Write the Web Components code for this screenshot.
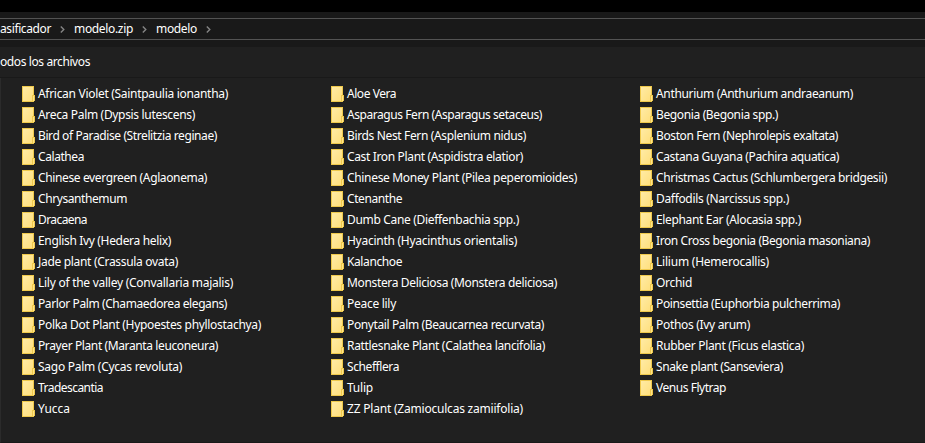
<!DOCTYPE html>
<html lang="es"><head><meta charset="utf-8"><title>modelo</title>
<style>html,body{margin:0;background:#202020;overflow:hidden}</style></head>
<body><file-window></file-window>
<script>
class FitText extends HTMLElement{
  connectedCallback(){
    const r=this.attachShadow({mode:'open'});
    r.innerHTML='<style>:host{display:inline-block;white-space:pre}span{display:inline-block}</style><span><slot></slot></span>';
    const s=r.querySelector('span'),w=+this.getAttribute('width');
    this.style.width=w+'px';
    s.style.letterSpacing=((w-s.getBoundingClientRect().width)/this.textContent.length)+'px';
  }
}
customElements.define('fit-text',FitText);

class FolderItem extends HTMLElement{
  connectedCallback(){
    this.attachShadow({mode:'open'}).innerHTML=`<style>
    :host{display:flex;height:21px;align-items:center;gap:3px;color:#fff}
    svg{width:13px;height:16px;flex:none}fit-text{line-height:21px}</style>
    <svg viewBox="0 0 13 16"><defs><linearGradient id="g" x2="1" y2="1"><stop stop-color="#ffeba5"/><stop offset="1" stop-color="#ffdf7c"/></linearGradient></defs>
    <path d="M0 0h12v9h1v6h-1v1H0z" fill="#efc94c"/><path d="M1 1h10v8h-1v6H1z" fill="url(#g)"/><path d="M11 10h1v5h-1z" fill="#ffe38a"/></svg>
    <fit-text width="${this.getAttribute('width')}">${this.getAttribute('name')}</fit-text>`;
  }
}
customElements.define('folder-item',FolderItem);

class PathBar extends HTMLElement{
  connectedCallback(){
    const chev='<svg viewBox="0 0 5 7"><path d="M.8.5L3.8 3.5L.8 6.5" fill="none" stroke="#858585" stroke-width="1.4"/></svg>';
    this.attachShadow({mode:'open'}).innerHTML=`<style>
    :host{display:block;box-sizing:border-box;height:35px;padding-top:6px;background:#191919;color:#fff}
    div{display:flex;align-items:center;box-sizing:border-box;height:22px;border:solid #535353;border-width:1px 0}
    fit-text{line-height:20px}svg{width:5px;height:7px;margin:1px 9px 0}</style>
    <div><fit-text width="51">asificador</fit-text>${chev}<fit-text width="59">modelo.zip</fit-text>${chev}<fit-text width="41">modelo</fit-text>${chev}</div>`;
  }
}
customElements.define('path-bar',PathBar);

class FileWindow extends HTMLElement{
  connectedCallback(){
    const cols=[
    [['African Violet (Saintpaulia ionantha)',190],['Areca Palm (Dypsis lutescens)',157],['Bird of Paradise (Strelitzia reginae)',179],['Calathea',46],['Chinese evergreen (Aglaonema)',169],['Chrysanthemum',89],['Dracaena',49],['English Ivy (Hedera helix)',133],['Jade plant (Crassula ovata)',140],['Lily of the valley (Convallaria majalis)',195],['Parlor Palm (Chamaedorea elegans)',189],['Polka Dot Plant (Hypoestes phyllostachya)',223],['Prayer Plant (Maranta leuconeura)',180],['Sago Palm (Cycas revoluta)',144],['Tradescantia',65],['Yucca',32]],
    [['Aloe Vera',49],['Asparagus Fern (Asparagus setaceus)',195],['Birds Nest Fern (Asplenium nidus)',179],['Cast Iron Plant (Aspidistra elatior)',176],['Chinese Money Plant (Pilea peperomioides)',230],['Ctenanthe',55],['Dumb Cane (Dieffenbachia spp.)',172],['Hyacinth (Hyacinthus orientalis)',170],['Kalanchoe',55],['Monstera Deliciosa (Monstera deliciosa)',210],['Peace lily',49],['Ponytail Palm (Beaucarnea recurvata)',197],['Rattlesnake Plant (Calathea lancifolia)',198],['Schefflera',52],['Tulip',26],['ZZ Plant (Zamioculcas zamiifolia)',176]],
    [['Anthurium (Anthurium andraeanum)',197],['Begonia (Begonia spp.)',122],['Boston Fern (Nephrolepis exaltata)',182],['Castana Guyana (Pachira aquatica)',183],['Christmas Cactus (Schlumbergera bridgesii)',231],['Daffodils (Narcissus spp.)',133],['Elephant Ear (Alocasia spp.)',145],['Iron Cross begonia (Begonia masoniana)',214],['Lilium (Hemerocallis)',113],['Orchid',36],['Poinsettia (Euphorbia pulcherrima)',184],['Pothos (Ivy arum)',94],['Rubber Plant (Ficus elastica)',148],['Snake plant (Sanseviera)',127],['Venus Flytrap',70]]];
    this.attachShadow({mode:'open'}).innerHTML=`<style>
    :host{display:flex;flex-direction:column;box-sizing:border-box;width:925px;height:443px;padding-top:12px;background:#000;font:12px "Noto Sans","Open Sans",sans-serif;color:#fff}
    header{height:30px;background:#202020;border-bottom:1px solid #191919}
    header fit-text{line-height:30px}
    main{flex:1;box-sizing:border-box;display:grid;grid-template-columns:repeat(3,309px);align-content:start;padding:5px 0 0 21px;background:#202020;border-left:1px solid #2b2b2b;border-bottom:1px solid #191919;overflow:hidden}</style>
    <path-bar></path-bar><header><fit-text width="90">odos los archivos</fit-text></header>
    <main>${cols.map(c=>`<section>${c.map(([n,w])=>`<folder-item name="${n}" width="${w}"></folder-item>`).join('')}</section>`).join('')}</main>`;
  }
}
customElements.define('file-window',FileWindow);
</script></body></html>
